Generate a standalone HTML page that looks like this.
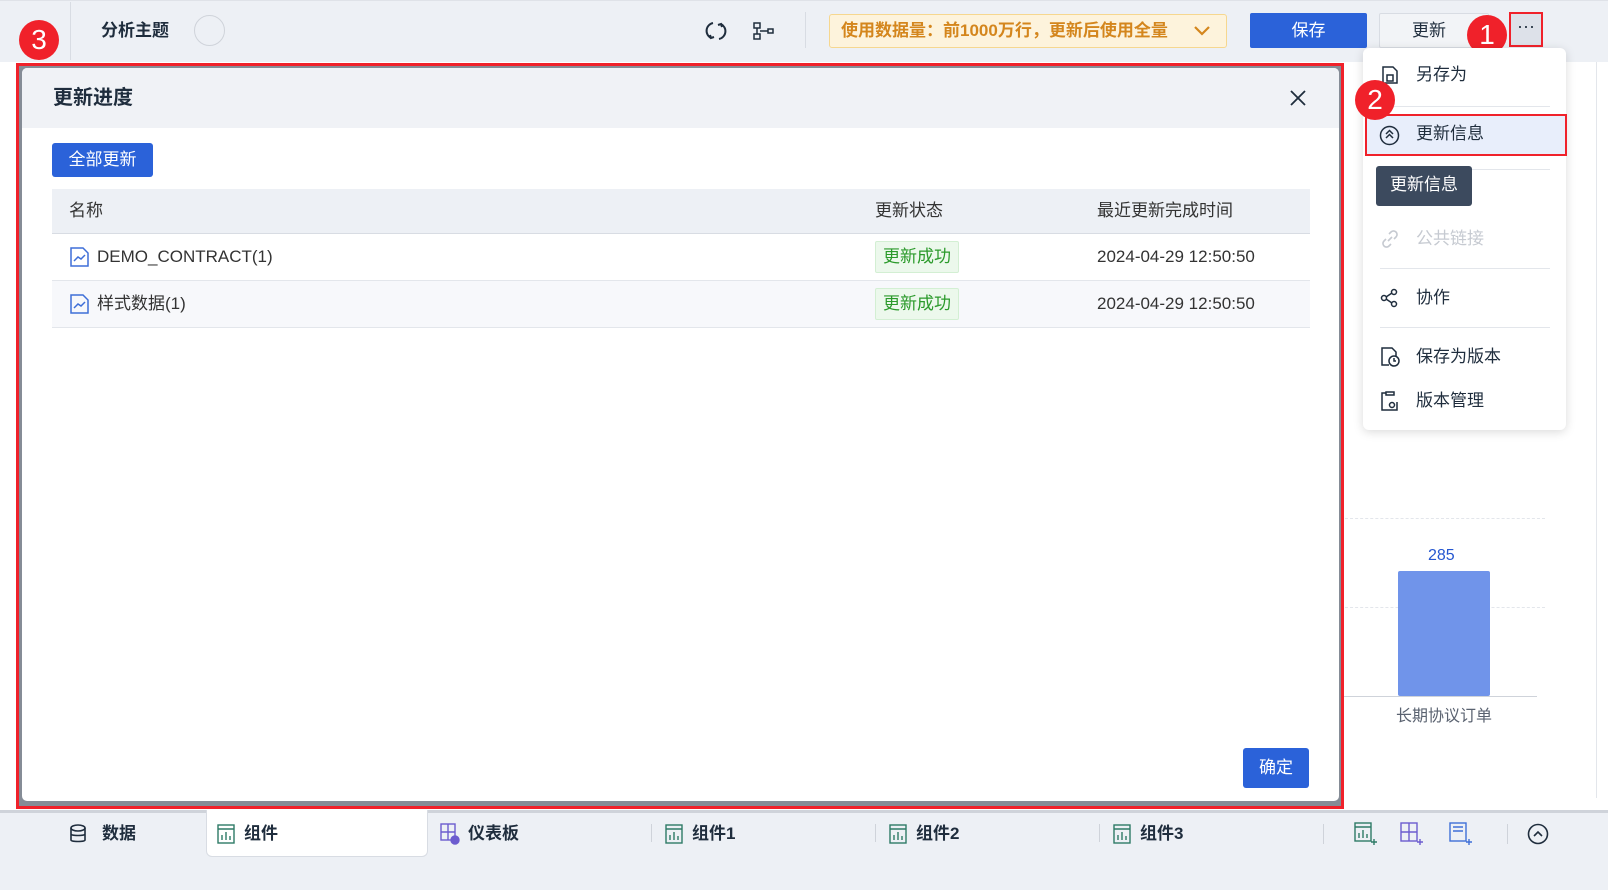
<!DOCTYPE html>
<html><head><meta charset="utf-8"><style>
*{box-sizing:border-box;margin:0;padding:0}
body{width:1608px;height:890px;position:relative;overflow:hidden;background:#fff;font-family:"Liberation Sans","Noto Sans CJK SC",sans-serif;color:#1f2d3d;font-size:16px;line-height:20px}
.a{position:absolute}
.badge{position:absolute;width:40px;height:40px;border-radius:50%;background:#f0212a;color:#fff;font-size:28px;text-align:center;line-height:40px}
.mi{position:absolute;left:1380px;font-size:17px;color:#1f2d3d}
.sep{position:absolute;left:1380px;width:170px;height:1px;background:#e3e6eb}
.tab{position:absolute;top:824px;font-size:17px;font-weight:bold;color:#1f2d3d}
</style></head><body>
<div class="a" style="left:0;top:0;width:1608px;height:62px;background:#edf0f5;border-top:1px solid #dfe2e8"></div>
<div class="a" style="left:70px;top:2px;width:1px;height:58px;background:#d8dce3"></div>
<div class="badge" style="left:19px;top:20px">3</div>
<div class="a" style="left:101px;top:21px;font-size:17px;font-weight:bold">分析主题</div>
<div class="a" style="left:194px;top:15px;width:31px;height:31px;border-radius:50%;border:1px solid #cfd3da"></div>
<svg class="a" style="left:705px;top:20px" width="22" height="22" viewBox="0 0 22 22" fill="none" stroke="#1f2d3d" stroke-width="2"><path d="M8 3A8 8 0 0 0 6 18"/><path d="M14 19A8 8 0 0 0 16 4"/><path d="M5 15l1 3 3-1M17 7l-1-3-3 1"/></svg>
<svg class="a" style="left:752px;top:20px" width="24" height="22" viewBox="0 0 24 22" fill="none" stroke="#1f2d3d" stroke-width="1.5"><rect x="2" y="3" width="6" height="5"/><rect x="2" y="14" width="6" height="5"/><rect x="16" y="9" width="5" height="4"/><path d="M5 8v6M8 11h8"/></svg>
<div class="a" style="left:805px;top:12px;width:1px;height:36px;background:#d8dce3"></div>
<div class="a" style="left:829px;top:14px;width:398px;height:34px;background:#fdf3dc;border:1px solid #f6d78f;border-radius:3px;color:#d4861d;font-weight:bold;font-size:17px;line-height:32px;padding-left:11px">使用数据量：前1000万行，更新后使用全量
<svg style="position:absolute;right:16px;top:10px" width="16" height="12" viewBox="0 0 16 12" fill="none" stroke="#d4861d" stroke-width="2.2"><path d="M1 2l7 7 7-7"/></svg></div>
<div class="a" style="left:1250px;top:13px;width:117px;height:35px;background:#2b62d9;border-radius:2px;color:#fff;text-align:center;line-height:35px;font-size:17px">保存</div>
<div class="a" style="left:1379px;top:13px;width:110px;height:35px;background:#f2f4f7;border:1px solid #d8dce3;border-radius:2px;text-align:center;line-height:33px;font-size:17px;padding-right:10px">更新</div>
<div class="a" style="left:1509px;top:12px;width:34px;height:35px;background:#dde1e9;border:2px solid #f0212a;text-align:center;line-height:24px;font-size:18px">···</div>
<div class="badge" style="left:1467px;top:15px">1</div>
<div class="a" style="left:1596px;top:62px;width:1px;height:736px;background:#e3e6eb"></div>
<div class="a" style="left:1345px;top:518px;width:200px;border-top:1px dashed #e3e6eb"></div>
<div class="a" style="left:1345px;top:607px;width:200px;border-top:1px dashed #e3e6eb"></div>
<div class="a" style="left:1343px;top:696px;width:194px;height:1px;background:#cfd3da"></div>
<div class="a" style="left:1398px;top:571px;width:92px;height:125px;background:#7094ea;border-radius:2px"></div>
<div class="a" style="left:1428px;top:546px;color:#2456d0;font-size:16px">285</div>
<div class="a" style="left:1396px;top:707px;color:#5a6270;font-size:16px">长期协议订单</div>
<div class="a" style="left:16px;top:63px;width:1328px;height:746px;border:3px solid #f0212a;background:#858c96"></div>
<div class="a" style="left:22px;top:68px;width:1317px;height:733px;background:#fff;border-radius:5px;overflow:hidden">
 <div class="a" style="left:0;top:0;width:1317px;height:60px;background:#f0f2f6"></div>
 <div class="a" style="left:31px;top:20px;font-size:20px;font-weight:bold">更新进度</div>
 <svg class="a" style="left:1267px;top:21px" width="18" height="18" viewBox="0 0 18 18" stroke="#1f2d3d" stroke-width="1.8"><path d="M2 2l14 14M16 2L2 16"/></svg>
 <div class="a" style="left:30px;top:75px;width:101px;height:34px;background:#2b62d9;border-radius:3px;color:#fff;line-height:34px;text-align:center;font-size:17px">全部更新</div>
 <div class="a" style="left:30px;top:121px;width:1258px;height:45px;background:#edf0f5;border-bottom:1px solid #d8dce3"></div>
 <div class="a" style="left:47px;top:133px;color:#333;font-size:17px">名称</div>
 <div class="a" style="left:853px;top:133px;color:#333;font-size:17px">更新状态</div>
 <div class="a" style="left:1075px;top:133px;color:#333;font-size:17px">最近更新完成时间</div>
 <div class="a" style="left:30px;top:166px;width:1258px;height:47px;border-bottom:1px solid #e3e6eb"></div>
 <div class="a" style="left:30px;top:213px;width:1258px;height:47px;background:#f7f8fb;border-bottom:1px solid #e3e6eb"></div>
 <svg class="a" style="left:48px;top:179px" width="19" height="20" viewBox="0 0 19 20" fill="none" stroke="#3f6fd8" stroke-width="1.5"><path d="M1 1h12l5 5v13H1z"/><path d="M4 14l4-4 3 2 4-4"/></svg>
 <div class="a" style="left:75px;top:179px;font-size:17px;color:#333">DEMO_CONTRACT(1)</div>
 <svg class="a" style="left:48px;top:226px" width="19" height="20" viewBox="0 0 19 20" fill="none" stroke="#3f6fd8" stroke-width="1.5"><path d="M1 1h12l5 5v13H1z"/><path d="M4 14l4-4 3 2 4-4"/></svg>
 <div class="a" style="left:75px;top:226px;font-size:17px;color:#333">样式数据(1)</div>
 <div class="a" style="left:853px;top:173px;width:84px;height:32px;background:#ecf8ec;border:1px solid #d3efd3;border-radius:2px;color:#2b9a2b;text-align:center;line-height:30px;font-size:17px">更新成功</div>
 <div class="a" style="left:853px;top:220px;width:84px;height:32px;background:#ecf8ec;border:1px solid #d3efd3;border-radius:2px;color:#2b9a2b;text-align:center;line-height:30px;font-size:17px">更新成功</div>
 <div class="a" style="left:1075px;top:179px;font-size:17px;color:#333">2024-04-29 12:50:50</div>
 <div class="a" style="left:1075px;top:226px;font-size:17px;color:#333">2024-04-29 12:50:50</div>
 <div class="a" style="left:1221px;top:680px;width:66px;height:40px;background:#2b62d9;border-radius:3px;color:#fff;text-align:center;line-height:40px;font-size:17px">确定</div>
</div>
<div class="a" style="left:1363px;top:48px;width:203px;height:382px;background:#fff;border-radius:6px;box-shadow:0 2px 10px rgba(0,0,0,.15)"></div>
<svg class="a" style="left:1380px;top:65px" width="20" height="20" viewBox="0 0 20 20" fill="none" stroke="#1f2d3d" stroke-width="1.5"><path d="M3 2h10l4 4v12H3z"/><rect x="7" y="10" width="6" height="6"/></svg>
<div class="mi" style="left:1416px;top:65px">另存为</div>
<div class="sep" style="top:106px"></div>
<div class="a" style="left:1365px;top:114px;width:202px;height:42px;background:#e8eefb;border:2px solid #f0212a"></div>
<svg class="a" style="left:1379px;top:125px" width="21" height="21" viewBox="0 0 21 21" fill="none" stroke="#1f2d3d" stroke-width="1.5"><circle cx="10.5" cy="10.5" r="9"/><path d="M7 9l3.5-3.5L14 9M7 13l3.5-3.5L14 13"/></svg>
<div class="mi" style="left:1416px;top:124px">更新信息</div>
<div class="badge" style="left:1355px;top:80px">2</div>
<div class="sep" style="top:169px"></div>
<div class="mi" style="left:1440px;top:184px;color:#c6cad1">置</div>
<div class="a" style="left:1376px;top:166px;width:96px;height:40px;background:#3c4a5e;border-radius:3px;color:#fff;font-size:17px;line-height:38px;text-align:center">更新信息</div>
<svg class="a" style="left:1380px;top:229px" width="20" height="20" viewBox="0 0 20 20" fill="none" stroke="#c6cad1" stroke-width="1.6"><path d="M8 12l4-4M9 5l2-2a3 3 0 0 1 5 5l-2 2M11 15l-2 2a3 3 0 0 1-5-5l2-2"/></svg>
<div class="mi" style="left:1416px;top:229px;color:#c6cad1">公共链接</div>
<div class="sep" style="top:268px"></div>
<svg class="a" style="left:1380px;top:288px" width="20" height="20" viewBox="0 0 20 20" fill="none" stroke="#1f2d3d" stroke-width="1.5"><circle cx="4" cy="10" r="2.5"/><circle cx="14" cy="4" r="2.5"/><circle cx="14" cy="16" r="2.5"/><path d="M6 9l6-4M6 11l6 4"/></svg>
<div class="mi" style="left:1416px;top:288px">协作</div>
<div class="sep" style="top:327px"></div>
<svg class="a" style="left:1380px;top:346px" width="22" height="22" viewBox="0 0 22 22" fill="none" stroke="#1f2d3d" stroke-width="1.5"><path d="M9 19H2V2h10l4 4v4"/><circle cx="14" cy="15" r="5"/><path d="M14 12v3h2"/></svg>
<div class="mi" style="left:1416px;top:347px">保存为版本</div>
<svg class="a" style="left:1380px;top:390px" width="22" height="22" viewBox="0 0 22 22" fill="none" stroke="#1f2d3d" stroke-width="1.5"><path d="M6 3H2v17h15v-8"/><path d="M6 2h8v3H6z"/><circle cx="12" cy="15" r="2.5"/></svg>
<div class="mi" style="left:1416px;top:391px">版本管理</div>
<div class="a" style="left:0;top:810px;width:1608px;height:80px;background:#edf0f5;border-top:3px solid #cfd3da"></div>
<div class="a" style="left:206px;top:810px;width:222px;height:47px;background:#fff;border:1px solid #d8dce3;border-top:none;border-radius:0 0 6px 6px"></div>
<svg class="a" style="left:69px;top:824px" width="18" height="20" viewBox="0 0 18 20" fill="none" stroke="#1f2d3d" stroke-width="1.6"><ellipse cx="9" cy="4" rx="7" ry="3"/><path d="M2 4v12c0 2 14 2 14 0V4M2 10c0 2 14 2 14 0"/></svg>
<div class="tab" style="left:102px">数据</div>
<svg class="a" style="left:217px;top:824px" width="18" height="20" viewBox="0 0 18 20" fill="none" stroke="#2e7a66" stroke-width="1.4"><rect x="1" y="1" width="16" height="18"/><path d="M1 5h16M5 16v-5M9 16v-8M13 16v-4"/></svg>
<div class="tab" style="left:244px">组件</div>
<svg class="a" style="left:440px;top:823px" width="20" height="22" viewBox="0 0 20 22" fill="none" stroke="#6c5ccf" stroke-width="1.4"><rect x="1" y="1" width="14" height="16"/><path d="M8 1v16M1 9h14"/><circle cx="15" cy="17" r="4" fill="#6c5ccf"/></svg>
<div class="tab" style="left:468px">仪表板</div>
<div class="a" style="left:651px;top:824px;width:1px;height:18px;background:#cfd3da"></div>
<svg class="a" style="left:665px;top:824px" width="18" height="20" viewBox="0 0 18 20" fill="none" stroke="#2e7a66" stroke-width="1.4"><rect x="1" y="1" width="16" height="18"/><path d="M1 5h16M5 16v-5M9 16v-8M13 16v-4"/></svg>
<div class="tab" style="left:692px">组件1</div>
<div class="a" style="left:875px;top:824px;width:1px;height:18px;background:#cfd3da"></div>
<svg class="a" style="left:889px;top:824px" width="18" height="20" viewBox="0 0 18 20" fill="none" stroke="#2e7a66" stroke-width="1.4"><rect x="1" y="1" width="16" height="18"/><path d="M1 5h16M5 16v-5M9 16v-8M13 16v-4"/></svg>
<div class="tab" style="left:916px">组件2</div>
<div class="a" style="left:1099px;top:824px;width:1px;height:18px;background:#cfd3da"></div>
<svg class="a" style="left:1113px;top:824px" width="18" height="20" viewBox="0 0 18 20" fill="none" stroke="#2e7a66" stroke-width="1.4"><rect x="1" y="1" width="16" height="18"/><path d="M1 5h16M5 16v-5M9 16v-8M13 16v-4"/></svg>
<div class="tab" style="left:1140px">组件3</div>
<div class="a" style="left:1323px;top:824px;width:1px;height:20px;background:#cfd3da"></div>
<svg class="a" style="left:1354px;top:822px" width="24" height="24" viewBox="0 0 24 24" fill="none" stroke="#2e7a66" stroke-width="1.4"><rect x="1" y="1" width="16" height="18"/><path d="M1 5h16M5 16v-5M9 16v-8M13 16v-4M20 17v6M17 20h6"/></svg>
<svg class="a" style="left:1400px;top:822px" width="24" height="24" viewBox="0 0 24 24" fill="none" stroke="#6c5ccf" stroke-width="1.4"><rect x="1" y="1" width="16" height="18"/><path d="M9 1v18M1 10h16M20 17v6M17 20h6"/></svg>
<svg class="a" style="left:1449px;top:822px" width="24" height="24" viewBox="0 0 24 24" fill="none" stroke="#3f6fd8" stroke-width="1.4"><rect x="1" y="1" width="16" height="18"/><path d="M4 5h10M4 9h10M20 17v6M17 20h6"/></svg>
<div class="a" style="left:1507px;top:824px;width:1px;height:20px;background:#cfd3da"></div>
<svg class="a" style="left:1527px;top:823px" width="22" height="22" viewBox="0 0 22 22" fill="none" stroke="#1f2d3d" stroke-width="1.6"><circle cx="11" cy="11" r="9.5"/><path d="M7 13l4-4 4 4"/></svg>
</body></html>
